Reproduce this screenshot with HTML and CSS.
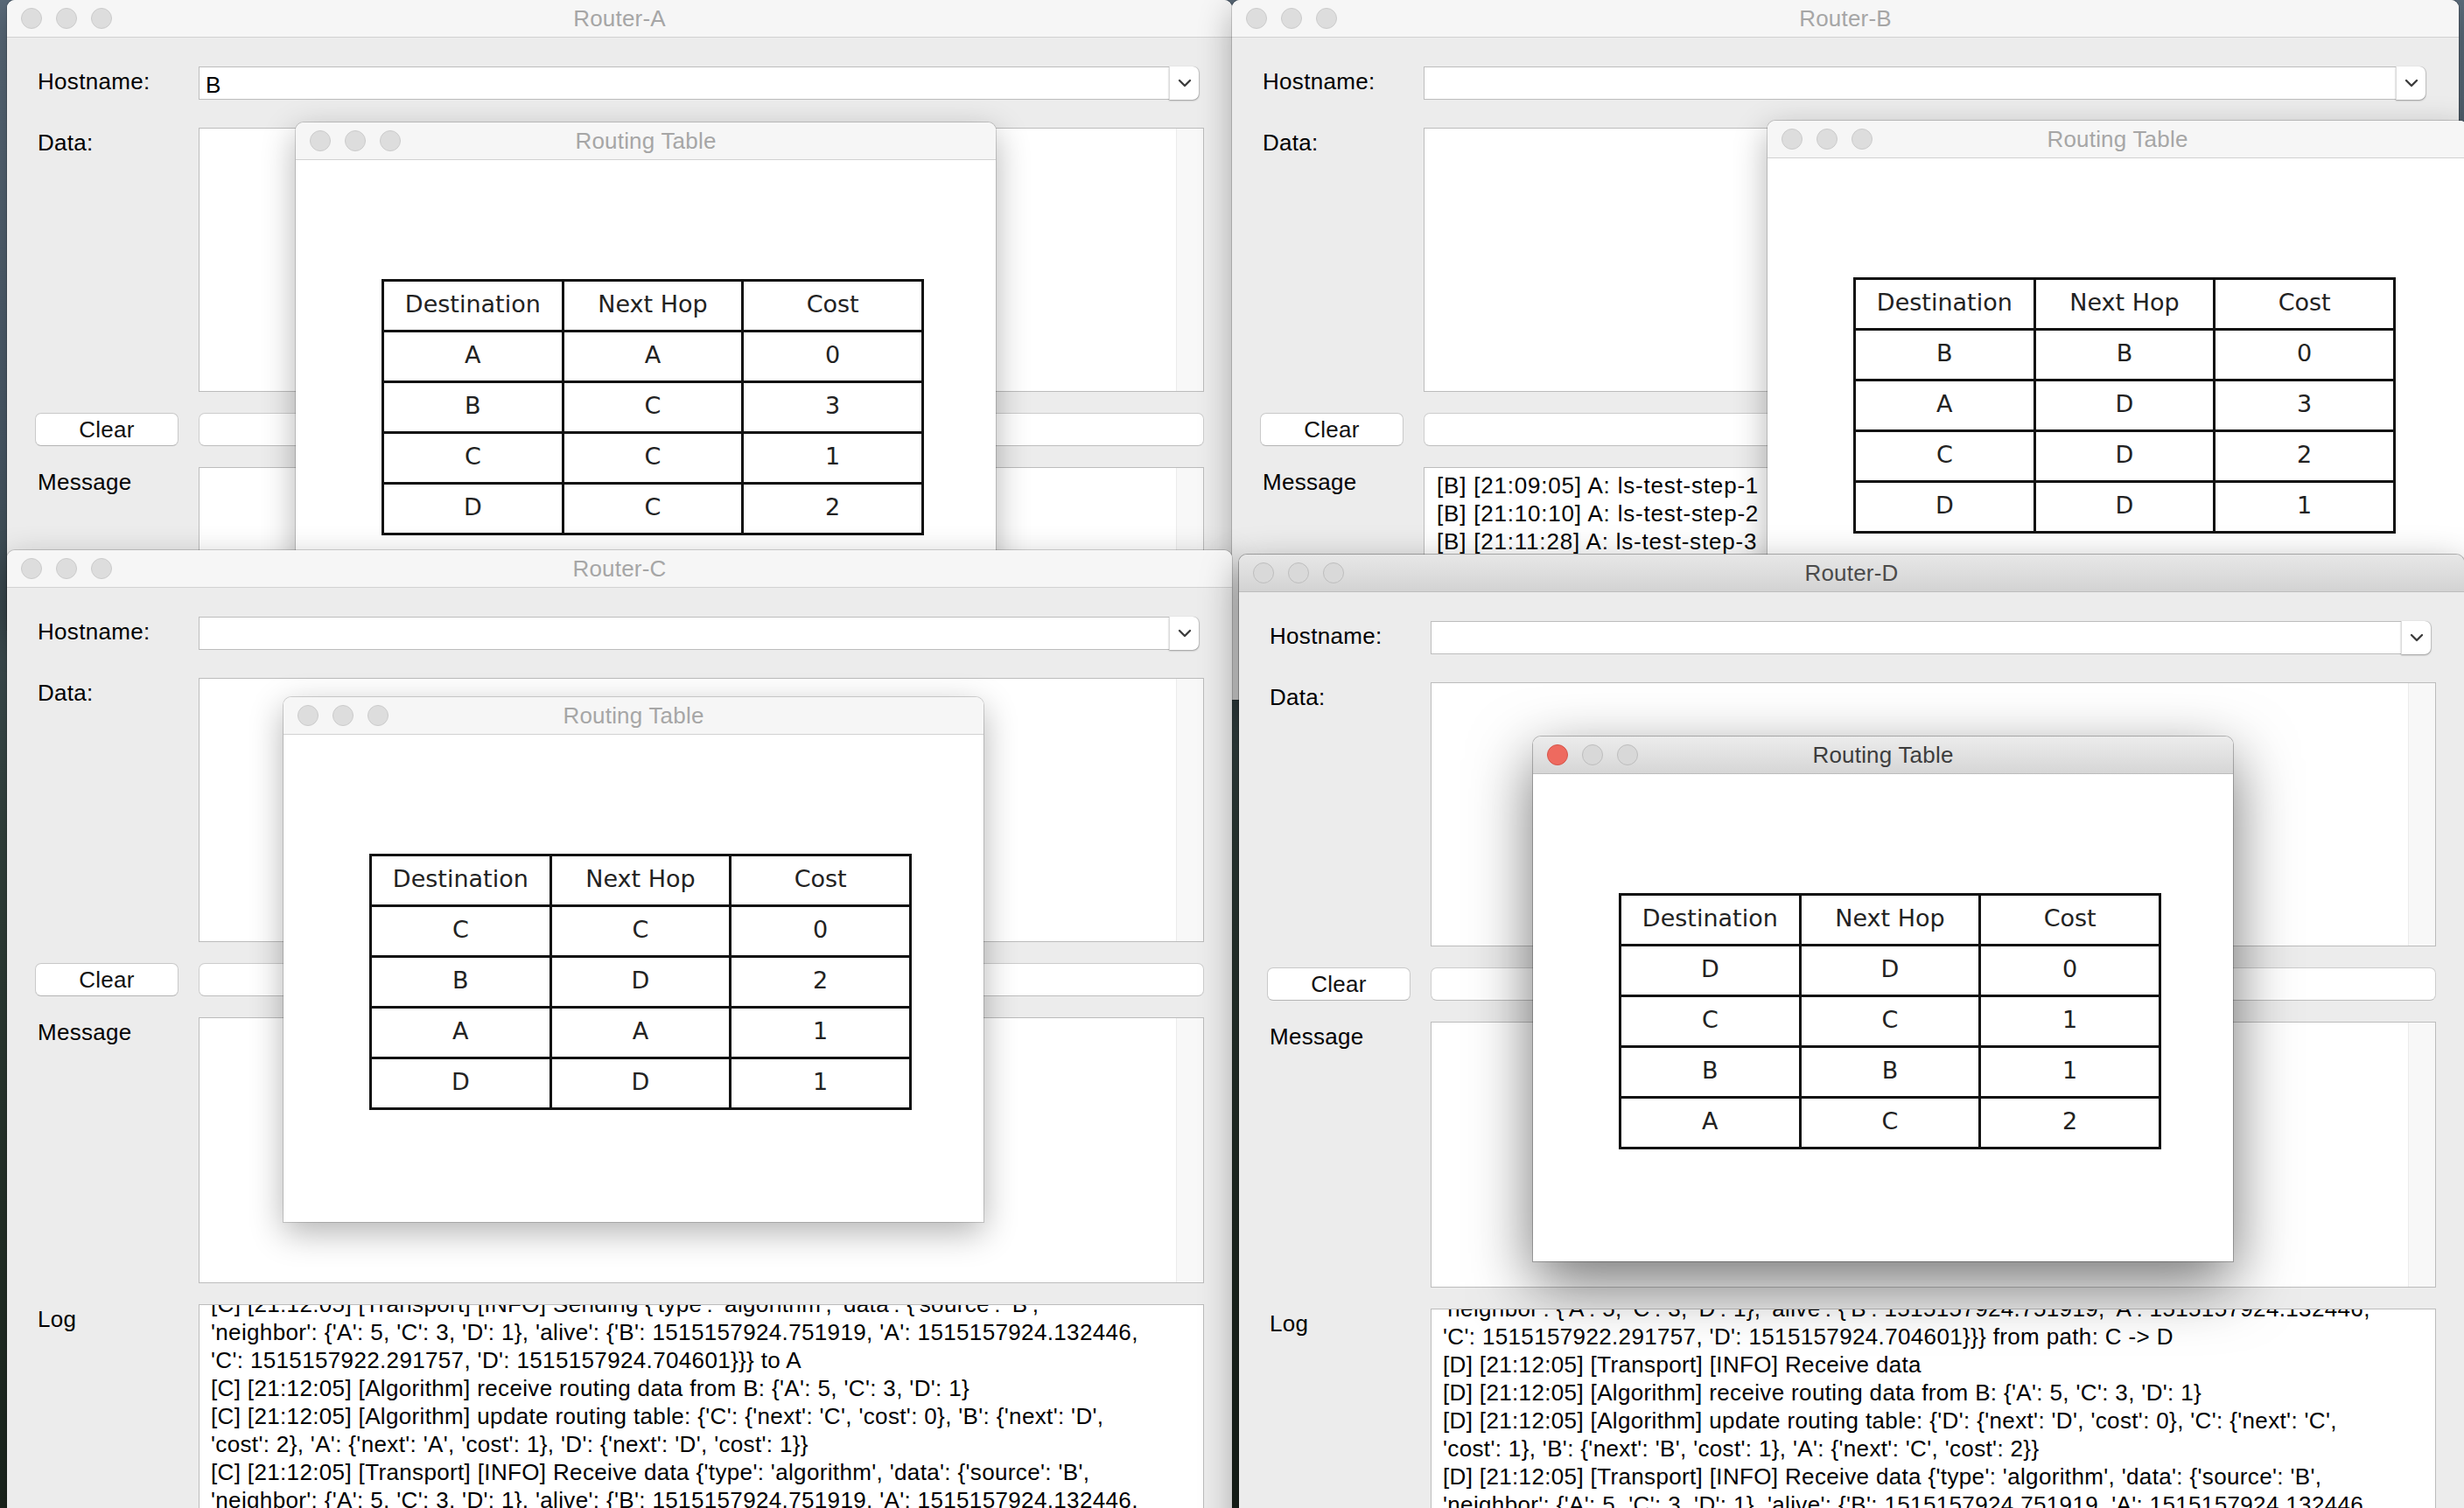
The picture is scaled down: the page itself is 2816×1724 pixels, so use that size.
FILE: index.html
```html
<!DOCTYPE html>
<html lang="en">
<head>
<meta charset="utf-8">
<title>Routers</title>
<link rel="stylesheet" href="styles.css">
</head>
<body>
<div class="desktop">

  <!-- Router-A -->
  <section class="win router win-a">
    <header class="titlebar">
      <div class="lights"><span class="light"></span><span class="light"></span><span class="light"></span></div>
      <div class="title">Router-A</div>
      <div></div>
    </header>
    <div class="form">
      <div class="label">Hostname:</div>
      <div class="combo"><div class="combo-text">B</div><div class="combo-btn"><svg width="16" height="10" viewBox="0 0 16 10"><path d="M2 2 L8 8 L14 2" fill="none" stroke="#3d3d3d" stroke-width="2.4" stroke-linecap="round" stroke-linejoin="round"/></svg></div></div>
      <div class="label">Data:</div>
      <div class="textarea"><div class="ta-content"></div><div class="ta-track"></div></div>
      <div class="button">Clear</div>
      <div class="field"></div>
      <div class="label">Message</div>
      <div class="textarea"><div class="ta-content"></div><div class="ta-track"></div></div>
    </div>
  </section>

  <!-- Routing Table A -->
  <section class="win rt rt-a">
    <header class="titlebar">
      <div class="lights"><span class="light"></span><span class="light"></span><span class="light"></span></div>
      <div class="title">Routing Table</div>
      <div></div>
    </header>
    <div class="rt-body">
      <table class="routes">
        <tr><td>Destination</td><td>Next Hop</td><td>Cost</td></tr>
        <tr><td>A</td><td>A</td><td>0</td></tr>
        <tr><td>B</td><td>C</td><td>3</td></tr>
        <tr><td>C</td><td>C</td><td>1</td></tr>
        <tr><td>D</td><td>C</td><td>2</td></tr>
      </table>
    </div>
  </section>

  <!-- Router-B -->
  <section class="win router win-b">
    <header class="titlebar">
      <div class="lights"><span class="light"></span><span class="light"></span><span class="light"></span></div>
      <div class="title">Router-B</div>
      <div></div>
    </header>
    <div class="form">
      <div class="label">Hostname:</div>
      <div class="combo"><div class="combo-text"></div><div class="combo-btn"><svg width="16" height="10" viewBox="0 0 16 10"><path d="M2 2 L8 8 L14 2" fill="none" stroke="#3d3d3d" stroke-width="2.4" stroke-linecap="round" stroke-linejoin="round"/></svg></div></div>
      <div class="label">Data:</div>
      <div class="textarea"><div class="ta-content"></div><div class="ta-track"></div></div>
      <div class="button">Clear</div>
      <div class="field"></div>
      <div class="label">Message</div>
      <div class="textarea"><div class="ta-content msg">
        <div class="line">[B] [21:09:05] A: ls-test-step-1</div>
        <div class="line">[B] [21:10:10] A: ls-test-step-2</div>
        <div class="line">[B] [21:11:28] A: ls-test-step-3</div>
      </div><div class="ta-track"></div></div>
    </div>
  </section>

  <!-- Routing Table B -->
  <section class="win rt rt-b">
    <header class="titlebar">
      <div class="lights"><span class="light"></span><span class="light"></span><span class="light"></span></div>
      <div class="title">Routing Table</div>
      <div></div>
    </header>
    <div class="rt-body">
      <table class="routes">
        <tr><td>Destination</td><td>Next Hop</td><td>Cost</td></tr>
        <tr><td>B</td><td>B</td><td>0</td></tr>
        <tr><td>A</td><td>D</td><td>3</td></tr>
        <tr><td>C</td><td>D</td><td>2</td></tr>
        <tr><td>D</td><td>D</td><td>1</td></tr>
      </table>
    </div>
  </section>

  <!-- Router-C -->
  <section class="win router win-c">
    <header class="titlebar">
      <div class="lights"><span class="light"></span><span class="light"></span><span class="light"></span></div>
      <div class="title">Router-C</div>
      <div></div>
    </header>
    <div class="form">
      <div class="label">Hostname:</div>
      <div class="combo"><div class="combo-text"></div><div class="combo-btn"><svg width="16" height="10" viewBox="0 0 16 10"><path d="M2 2 L8 8 L14 2" fill="none" stroke="#3d3d3d" stroke-width="2.4" stroke-linecap="round" stroke-linejoin="round"/></svg></div></div>
      <div class="label">Data:</div>
      <div class="textarea"><div class="ta-content"></div><div class="ta-track"></div></div>
      <div class="button">Clear</div>
      <div class="field"></div>
      <div class="label">Message</div>
      <div class="textarea"><div class="ta-content"></div><div class="ta-track"></div></div>
      <div class="label">Log</div>
      <div class="textarea log"><div class="ta-content logtext">
        <div class="line">[C] [21:12:05] [Transport] [INFO] Sending {'type': 'algorithm', 'data': {'source': 'B',</div>
        <div class="line">'neighbor': {'A': 5, 'C': 3, 'D': 1}, 'alive': {'B': 1515157924.751919, 'A': 1515157924.132446,</div>
        <div class="line">'C': 1515157922.291757, 'D': 1515157924.704601}}} to A</div>
        <div class="line">[C] [21:12:05] [Algorithm] receive routing data from B: {'A': 5, 'C': 3, 'D': 1}</div>
        <div class="line">[C] [21:12:05] [Algorithm] update routing table: {'C': {'next': 'C', 'cost': 0}, 'B': {'next': 'D',</div>
        <div class="line">'cost': 2}, 'A': {'next': 'A', 'cost': 1}, 'D': {'next': 'D', 'cost': 1}}</div>
        <div class="line">[C] [21:12:05] [Transport] [INFO] Receive data {'type': 'algorithm', 'data': {'source': 'B',</div>
        <div class="line">'neighbor': {'A': 5, 'C': 3, 'D': 1}, 'alive': {'B': 1515157924.751919, 'A': 1515157924.132446,</div>
      </div></div>
    </div>
  </section>

  <!-- Routing Table C -->
  <section class="win rt rt-c">
    <header class="titlebar">
      <div class="lights"><span class="light"></span><span class="light"></span><span class="light"></span></div>
      <div class="title">Routing Table</div>
      <div></div>
    </header>
    <div class="rt-body">
      <table class="routes">
        <tr><td>Destination</td><td>Next Hop</td><td>Cost</td></tr>
        <tr><td>C</td><td>C</td><td>0</td></tr>
        <tr><td>B</td><td>D</td><td>2</td></tr>
        <tr><td>A</td><td>A</td><td>1</td></tr>
        <tr><td>D</td><td>D</td><td>1</td></tr>
      </table>
    </div>
  </section>

  <!-- Router-D -->
  <section class="win router win-d main-active">
    <header class="titlebar">
      <div class="lights"><span class="light"></span><span class="light"></span><span class="light"></span></div>
      <div class="title">Router-D</div>
      <div></div>
    </header>
    <div class="form">
      <div class="label">Hostname:</div>
      <div class="combo"><div class="combo-text"></div><div class="combo-btn"><svg width="16" height="10" viewBox="0 0 16 10"><path d="M2 2 L8 8 L14 2" fill="none" stroke="#3d3d3d" stroke-width="2.4" stroke-linecap="round" stroke-linejoin="round"/></svg></div></div>
      <div class="label">Data:</div>
      <div class="textarea"><div class="ta-content"></div><div class="ta-track"></div></div>
      <div class="button">Clear</div>
      <div class="field"></div>
      <div class="label">Message</div>
      <div class="textarea"><div class="ta-content"></div><div class="ta-track"></div></div>
      <div class="label">Log</div>
      <div class="textarea log"><div class="ta-content logtext">
        <div class="line">'neighbor': {'A': 5, 'C': 3, 'D': 1}, 'alive': {'B': 1515157924.751919, 'A': 1515157924.132446,</div>
        <div class="line">'C': 1515157922.291757, 'D': 1515157924.704601}}} from path: C -&gt; D</div>
        <div class="line">[D] [21:12:05] [Transport] [INFO] Receive data</div>
        <div class="line">[D] [21:12:05] [Algorithm] receive routing data from B: {'A': 5, 'C': 3, 'D': 1}</div>
        <div class="line">[D] [21:12:05] [Algorithm] update routing table: {'D': {'next': 'D', 'cost': 0}, 'C': {'next': 'C',</div>
        <div class="line">'cost': 1}, 'B': {'next': 'B', 'cost': 1}, 'A': {'next': 'C', 'cost': 2}}</div>
        <div class="line">[D] [21:12:05] [Transport] [INFO] Receive data {'type': 'algorithm', 'data': {'source': 'B',</div>
        <div class="line">'neighbor': {'A': 5, 'C': 3, 'D': 1}, 'alive': {'B': 1515157924.751919, 'A': 1515157924.132446,</div>
      </div></div>
    </div>
  </section>

  <!-- Routing Table D (key window) -->
  <section class="win rt rt-d key">
    <header class="titlebar">
      <div class="lights"><span class="light close"></span><span class="light"></span><span class="light"></span></div>
      <div class="title">Routing Table</div>
      <div></div>
    </header>
    <div class="rt-body">
      <table class="routes">
        <tr><td>Destination</td><td>Next Hop</td><td>Cost</td></tr>
        <tr><td>D</td><td>D</td><td>0</td></tr>
        <tr><td>C</td><td>C</td><td>1</td></tr>
        <tr><td>B</td><td>B</td><td>1</td></tr>
        <tr><td>A</td><td>C</td><td>2</td></tr>
      </table>
    </div>
  </section>

</div>
</body>
</html>
```

FILE: styles.css
```css
html, body {
  margin: 0;
  padding: 0;
}
body {
  background: #2b3a35;
  font-family: "Liberation Sans", Arial, sans-serif;
}
.desktop {
  position: relative;
  width: 2816px;
  height: 1724px;
  overflow: hidden;
  background: linear-gradient(180deg, #5b6b7a 0%, #4a5a68 30%, #34443f 55%, #26332a 80%, #1c271f 100%);
}

/* generic window */
.win {
  position: absolute;
  box-sizing: border-box;
  background: #ececec;
  border-radius: 9px 9px 0 0;
  box-shadow: 0 0 0 1px rgba(0, 0, 0, 0.16), 0 12px 38px rgba(0, 0, 0, 0.30);
  overflow: hidden;
  display: flex;
  flex-direction: column;
}
.titlebar {
  flex: none;
  height: 42px;
  border-bottom: 1px solid #d2d2d2;
  background: #f6f6f6;
  display: grid;
  grid-template-columns: 1fr auto 1fr;
  align-items: center;
}
.lights {
  display: flex;
  gap: 16px;
  padding-left: 16px;
}
.light {
  width: 22px;
  height: 22px;
  border-radius: 50%;
  background: #dddddd;
  border: 1px solid #cbcbcb;
}
.title {
  font-size: 26px;
  color: #a6a6a6;
  line-height: 30px;
  letter-spacing: 0.2px;
}

/* router windows */
.router {
  width: 1400px;
  height: 1200px;
}
.win-a { left: 8px; top: 0; height: 720px; }
.win-b { left: 1408px; top: 0; width: 1402px; height: 800px; }
.win-c { left: 8px; top: 629px; }
.win-d { left: 1416px; top: 634px; }

.main-active .titlebar {
  background: linear-gradient(180deg, #e7e7e7 0%, #d3d3d3 100%);
  border-bottom-color: #bdbdbd;
}
.main-active .title { color: #4b4b4b; }
.main-active .light { background: #d9d9d9; border-color: #bdbdbd; }
.main-active {
  box-shadow: 0 0 0 1px rgba(0, 0, 0, 0.28), 0 14px 44px rgba(0, 0, 0, 0.40);
}

.form {
  display: grid;
  grid-template-columns: 164px 1fr;
  grid-template-rows: 46px 302px 38px 304px 400px;
  column-gap: 23px;
  row-gap: 24px;
  padding: 33px 32px 0 32px;
}
.label {
  font-size: 26px;
  line-height: 30px;
  letter-spacing: 0.3px;
  color: #000;
  padding-left: 3px;
  padding-top: 2px;
}
.combo {
  box-sizing: border-box;
  height: 38px;
  width: calc(100% - 6px);
  background: #fff;
  border: 1px solid #bdbdbd;
  border-right: none;
  border-radius: 0 7px 7px 0;
  display: flex;
}
.combo-text {
  flex: 1;
  font-size: 26px;
  line-height: 30px;
  padding: 5px 0 0 7px;
  color: #000;
}
.combo-btn {
  width: 33px;
  margin: -1px 0;
  border-left: 1px solid #dcdcdc;
  border-radius: 0 7px 7px 0;
  background: #fff;
  box-shadow: 0 1px 2px rgba(0, 0, 0, 0.35), 1px 0 1px rgba(0, 0, 0, 0.12);
  display: flex;
  align-items: center;
  justify-content: center;
}
.textarea {
  box-sizing: border-box;
  background: #fff;
  border: 1px solid #bcbcbc;
  display: flex;
  overflow: hidden;
}
.ta-content {
  flex: 1;
  min-width: 0;
  overflow: hidden;
}
.ta-track {
  width: 30px;
  flex: none;
  background: #f8f8f8;
  border-left: 1px solid #ebebeb;
}
.button {
  box-sizing: border-box;
  height: 38px;
  background: #fff;
  border: 1px solid #c9c9c9;
  border-bottom-color: #b4b4b4;
  border-radius: 7px;
  font-size: 26px;
  letter-spacing: 0.3px;
  display: flex;
  align-items: center;
  justify-content: center;
  color: #111;
}
.field {
  box-sizing: border-box;
  height: 38px;
  background: #fff;
  border: 1px solid #cdcdcd;
  border-bottom-color: #bdbdbd;
  border-radius: 7px;
}
.line {
  font-size: 26px;
  line-height: 32px;
  letter-spacing: 0.35px;
  white-space: nowrap;
  color: #000;
}
.msg {
  padding: 4px 0 0 14px;
}
.msg .line {
  letter-spacing: 0.8px;
}
.logtext {
  padding-left: 13px;
  margin-top: -17px;
}

/* routing table windows */
.rt {
  width: 800px;
  height: 600px;
  background: #fff;
}
.rt-a { left: 338px; top: 140px; }
.rt-b { left: 2020px; top: 138px; }
.rt-c { left: 324px; top: 797px; }
.rt-d { left: 1752px; top: 842px; }

.rt-body {
  flex: 1;
  background: #fff;
  padding: 136px 0 0 98px;
}
.routes {
  border-collapse: collapse;
  width: 620px;
  font-family: "DejaVu Sans", Verdana, sans-serif;
  font-size: 27px;
  color: #222;
}
.routes td {
  border: 3px solid #111;
  width: 33.33%;
  height: 51px;
  padding: 0 0 4px 0;
  text-align: center;
  vertical-align: middle;
}

.key {
  box-shadow: 0 0 0 1px rgba(0, 0, 0, 0.25), 0 24px 70px rgba(0, 0, 0, 0.55);
}
.key .titlebar {
  background: linear-gradient(180deg, #ececec 0%, #d6d6d6 100%);
  border-bottom-color: #bcbcbc;
}
.key .title { color: #3d3d3d; }
.key .light { background: #d8d8d8; border-color: #bdbdbd; }
.key .light.close { background: #ee6a5f; border-color: #d4554a; }
```
